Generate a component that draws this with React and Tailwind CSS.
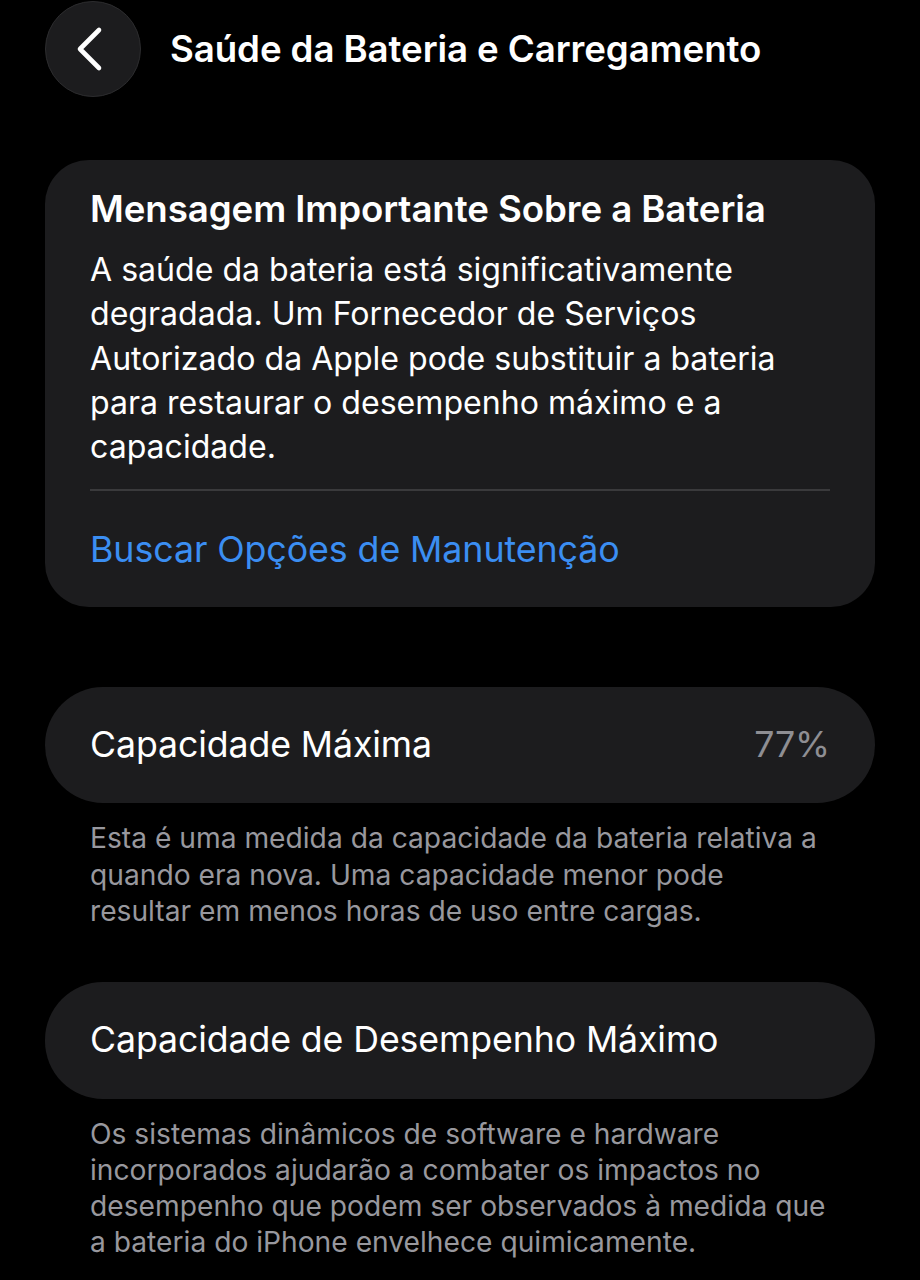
import React from "react";

export default function App() {
  return (
    <div className="min-h-[1280px] w-[920px] bg-black text-white" style={{ fontFamily: "Inter, 'Noto Sans', sans-serif" }}>
      {/* header */}
      <div className="flex items-center h-[98px] pl-[45px]">
        <button className="w-[96px] h-[96px] rounded-full bg-[#1c1c1e] border border-[#2c2c2e] flex items-center justify-center">
          <svg width="28" height="46" viewBox="0 0 28 46" fill="none" className="-ml-[6px]">
            <path d="M23 4 L4 23 L23 42" stroke="white" strokeWidth="4.6" strokeLinecap="round" strokeLinejoin="round" />
          </svg>
        </button>
        <h1 className="ml-[29px] text-[36.7px] font-semibold tracking-[-0.1px]">Saúde da Bateria e Carregamento</h1>
      </div>

      <div className="px-[45px] pt-[62px]">
        {/* important message */}
        <div className="rounded-[44px] bg-[#1c1c1e] px-[45px] pt-[27px] h-[447px]">
          <h2 className="text-[36.7px] font-semibold leading-[44px] tracking-[-0.1px]">Mensagem Importante Sobre a Bateria</h2>
          <p className="mt-[17px] text-[32.1px] leading-[44.3px] text-white">
            A saúde da bateria está significativamente degradada. Um Fornecedor de Serviços Autorizado da Apple pode substituir a bateria para restaurar o desempenho máximo e a capacidade.
          </p>
          <div className="mt-[20px] h-[2px] bg-[#3a3a3c]" />
          <div className="pt-[36px] text-[35.8px] leading-[44px] text-[#3b8ef2] tracking-[-0.1px]">Buscar Opções de Manutenção</div>
        </div>

        {/* max capacity */}
        <div className="mt-[80px] h-[116px] rounded-[58px] bg-[#1c1c1e] px-[45px] flex items-center justify-between">
          <span className="text-[35.7px] tracking-[-0.1px]">Capacidade Máxima</span>
          <span className="text-[35.7px] text-[#8e8e93] tracking-[-0.1px]">77%</span>
        </div>
        <p className="px-[45px] pt-[17px] text-[28.2px] leading-[36.5px] text-[#98989e]">
          Esta é uma medida da capacidade da bateria relativa a quando era nova. Uma capacidade menor pode resultar em menos horas de uso entre cargas.
        </p>

        {/* peak performance */}
        <div className="mt-[52px] h-[117px] rounded-[58px] bg-[#1c1c1e] px-[45px] flex items-center">
          <span className="text-[35.7px] tracking-[-0.1px]">Capacidade de Desempenho Máximo</span>
        </div>
        <p className="px-[45px] pt-[17px] text-[28.2px] leading-[36.2px] text-[#98989e]">
          Os sistemas dinâmicos de software e hardware incorporados ajudarão a combater os impactos no desempenho que podem ser observados à medida que a bateria do iPhone envelhece quimicamente.
        </p>
      </div>
    </div>
  );
}
